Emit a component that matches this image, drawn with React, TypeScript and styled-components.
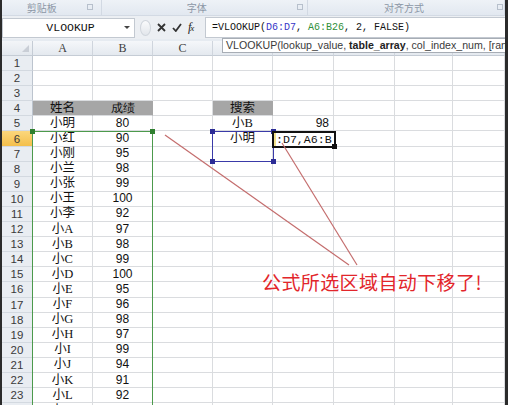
import React from 'react';
import styled, { createGlobalStyle } from 'styled-components';

const GlobalStyle = createGlobalStyle`
  html, body { margin: 0; padding: 0; background: #fff; }
  body { font-family: 'Liberation Sans', 'Noto Sans CJK SC', sans-serif; }
`;

const ROW_H = 15.1;
const HEAD_H = 15;
const COLS = [31, 60, 60, 60, 60, 61, 61, 58, 52];
const LETTERS = ['A', 'B', 'C', 'D', 'E', 'F', 'G', 'H'];

const colLeft = (i: number) => COLS.slice(0, i + 1).reduce((a, b) => a + b, 0);
const rowTop = (r: number) => HEAD_H + (r - 1) * ROW_H;

const Frame = styled.div`
  position: relative;
  width: 508px;
  height: 405px;
  box-sizing: border-box;
  border-left: 2px solid #2b2b2b;
  border-right: 3px solid #2b2b2b;
  overflow: hidden;
  background: #e6ebf1;
  display: flex;
  flex-direction: column;
`;

const Ribbon = styled.div`
  flex-shrink: 0;
  height: 15px;
  display: flex;
  background: linear-gradient(#eef2f7, #e2e8f0);
  border-bottom: 1px solid #d3dae4;
`;

const Group = styled.div<{ $w: number }>`
  width: ${({ $w }) => $w}px;
  display: flex;
  align-items: center;
  justify-content: center;
  position: relative;
  border-right: 1px solid #d2d9e3;
  font: 10px 'Noto Sans CJK SC', sans-serif;
  color: #8c97a6;
`;

const Launcher = styled.span<{ $right: number }>`
  position: absolute;
  right: ${({ $right }) => $right}px;
  top: 4px;
  width: 6px;
  height: 6px;
  border: 1px solid #b7c0cc;
  box-sizing: border-box;
`;

const FormulaBar = styled.div`
  flex-shrink: 0;
  height: 23px;
  display: flex;
  align-items: center;
  background: #eceff3;
  margin-bottom: 2px;
`;

const NameBox = styled.div`
  width: 133px;
  height: 20px;
  box-sizing: border-box;
  background: #fff;
  border: 1px solid #c3c9d1;
  display: flex;
  align-items: center;
  font: 11.5px 'Liberation Mono', monospace;
  color: #111;
`;

const NameText = styled.span`
  flex: 1;
  text-align: center;
  padding-left: 14px;
`;

const DropArrow = styled.span`
  width: 0;
  height: 0;
  border-left: 3px solid transparent;
  border-right: 3px solid transparent;
  border-top: 3px solid #444;
  margin-right: 4px;
`;

const Tools = styled.div`
  width: 70px;
  display: flex;
  align-items: center;
  gap: 6px;
  padding-left: 5px;
  box-sizing: border-box;
`;

const Knob = styled.span`
  width: 9px;
  height: 14px;
  border-radius: 50%;
  border: 1px solid #d0d5dc;
  background: linear-gradient(#fafbfc, #e2e6eb);
`;

const Fx = styled.span`
  font: italic 12px 'Liberation Serif', serif;
  color: #222;
  letter-spacing: -1px;
  & small { font-size: 9px; }
`;

const FormulaInput = styled.div`
  flex: 1;
  height: 21px;
  background: #fff;
  border: 1px solid #c3c9d1;
  border-right: none;
  box-sizing: border-box;
  display: flex;
  align-items: center;
  padding-left: 6px;
  font: 10px 'Liberation Mono', monospace;
  color: #111;
  white-space: pre;
`;

const Ref = styled.span<{ $c: string }>`
  color: ${({ $c }) => $c};
`;

const Tooltip = styled.div`
  position: absolute;
  left: 220px;
  top: 38px;
  height: 15px;
  width: 300px;
  box-sizing: border-box;
  border: 1px solid #a7adb5;
  background: #fff;
  padding-left: 3px;
  font: 10.6px 'Liberation Sans', sans-serif;
  line-height: 13px;
  color: #3a3a3a;
  white-space: nowrap;
  overflow: hidden;
  z-index: 3;
  & b { color: #222; }
`;

const Sheet = styled.div`
  position: relative;
  flex: 1;
  min-height: 0;
  background: #fff;
  display: grid;
  grid-template-columns: ${COLS.map((c) => `${c}px`).join(' ')};
  grid-template-rows: ${HEAD_H}px;
  grid-auto-rows: ${ROW_H}px;
  align-content: start;
`;

const Corner = styled.div`
  background: linear-gradient(#f3f5f8, #e3e8ee);
  border-right: 1px solid #c5ccd5;
  border-bottom: 1px solid #c5ccd5;
  position: relative;
  &::after {
    content: '';
    position: absolute;
    right: 3px;
    bottom: 3px;
    border-left: 7px solid transparent;
    border-bottom: 7px solid #c9ced6;
  }
`;

const ColHead = styled.div`
  background: linear-gradient(#f5f7fa, #e4e9ef);
  border-right: 1px solid #cfd5dd;
  border-bottom: 1px solid #c5ccd5;
  display: flex;
  align-items: center;
  justify-content: center;
  font: 12px 'Liberation Serif', serif;
  color: #3e3e3e;
  overflow: hidden;
`;

const RowHead = styled.div<{ $active?: boolean }>`
  background: ${({ $active }) => ($active ? 'linear-gradient(#fbd77d, #f4bf4b)' : '#e9edf2')};
  border-right: 1px solid #bcc4ce;
  border-bottom: 1px solid #d3d9e0;
  display: flex;
  align-items: center;
  justify-content: center;
  font: 11.5px 'Liberation Sans', sans-serif;
  color: #3a3a3a;
  box-sizing: border-box;
`;

const Cell = styled.div<{ $fill?: boolean; $align?: string; $num?: boolean }>`
  background: ${({ $fill }) => ($fill ? '#a6a6a6' : '#fff')};
  border-right: 1px solid ${({ $fill }) => ($fill ? '#a6a6a6' : '#dadcdf')};
  border-bottom: 1px solid #dadcdf;
  display: flex;
  align-items: center;
  justify-content: ${({ $align }) => $align || 'center'};
  padding-right: ${({ $align }) => ($align === 'flex-end' ? '4px' : '0')};
  box-sizing: border-box;
  font: ${({ $num }) => ($num ? "12px 'Liberation Sans'" : "12.5px 'Liberation Serif', 'Noto Sans CJK SC'")}, sans-serif;
  line-height: 13px;
  color: #111;
  white-space: nowrap;
  overflow: visible;
`;

const Box = styled.div<{ $x: number; $y: number; $w: number; $h: number; $c: string; $bw: number }>`
  position: absolute;
  left: ${({ $x }) => $x}px;
  top: ${({ $y }) => $y}px;
  width: ${({ $w }) => $w}px;
  height: ${({ $h }) => $h}px;
  box-sizing: border-box;
  border: ${({ $bw, $c }) => `${$bw}px solid ${$c}`};
  z-index: 2;
`;

const Handle = styled.span<{ $c: string; $l?: boolean; $t?: boolean }>`
  position: absolute;
  width: 5px;
  height: 5px;
  background: ${({ $c }) => $c};
  ${({ $l }) => ($l ? 'left: -3px;' : 'right: -3px;')}
  ${({ $t }) => ($t ? 'top: -3px;' : 'bottom: -3px;')}
`;

const EditText = styled.div`
  height: 100%;
  display: flex;
  align-items: center;
  background: #fff;
  font: 11.6px 'Liberation Mono', monospace;
  color: #111;
  white-space: pre;
  overflow: hidden;
  border-left: 2px solid #f2e18a;
`;

const Arrows = styled.svg`
  position: absolute;
  left: -2px;
  top: 0;
  z-index: 4;
  pointer-events: none;
`;

const Note = styled.div`
  position: absolute;
  left: 260px;
  top: 268px;
  font: 19px 'Noto Sans CJK SC', sans-serif;
  color: #e2262b;
  letter-spacing: 0.4px;
  text-shadow: 0 0 2px #fff, 0 0 2px #fff;
  z-index: 4;
  white-space: nowrap;
`;

type Row = { [col: string]: string };

const names: [string, string][] = [
  ['小明', '80'], ['小红', '90'], ['小刚', '95'], ['小兰', '98'], ['小张', '99'],
  ['小王', '100'], ['小李', '92'], ['小A', '97'], ['小B', '98'], ['小C', '99'],
  ['小D', '100'], ['小E', '95'], ['小F', '96'], ['小G', '98'], ['小H', '97'],
  ['小I', '99'], ['小J', '94'], ['小K', '91'], ['小L', '92'], ['小M', '93'],
];

const rows: Row[] = Array.from({ length: 24 }, (_, i) => {
  const r = i + 1;
  const row: Row = {};
  if (r === 4) {
    row.A = '姓名';
    row.B = '成绩';
    row.D = '搜索';
  }
  if (r >= 5 && r - 5 < names.length) {
    row.A = names[r - 5][0];
    row.B = names[r - 5][1];
  }
  if (r === 5) {
    row.D = '小B';
    row.E = '98';
  }
  if (r === 6) row.D = '小明';
  return row;
});

const App: React.FC = () => (
  <Frame>
    <GlobalStyle />
    <Ribbon>
      <Group $w={100}>
        <span style={{ marginRight: 20 }}>剪贴板</span>
        <Launcher $right={8} />
      </Group>
      <Group $w={206}>
        <span style={{ marginRight: 16 }}>字体</span>
        <Launcher $right={4} />
      </Group>
      <Group $w={197}>
        <span style={{ marginRight: 4 }}>对齐方式</span>
        <Launcher $right={1} />
      </Group>
    </Ribbon>

    <FormulaBar>
      <NameBox>
        <NameText>VLOOKUP</NameText>
        <DropArrow />
      </NameBox>
      <Tools>
        <Knob />
        <svg width="9" height="9" viewBox="0 0 9 9">
          <path d="M1 1 L8 8 M8 1 L1 8" stroke="#333" strokeWidth="1.8" />
        </svg>
        <svg width="10" height="9" viewBox="0 0 10 9">
          <path d="M1 5 L3.8 8 L9 1" stroke="#333" strokeWidth="1.8" fill="none" />
        </svg>
        <Fx>
          f<small>x</small>
        </Fx>
      </Tools>
      <FormulaInput>
        =VLOOKUP(<Ref $c="#3535c8">D6:D7</Ref>, <Ref $c="#2f8f3a">A6:B26</Ref>, 2, FALSE)
      </FormulaInput>
    </FormulaBar>

    <Tooltip>
      VLOOKUP(lookup_value, <b>table_array</b>, col_index_num, [range_lookup])
    </Tooltip>

    <Sheet>
      <Corner />
      {LETTERS.map((l) => (
        <ColHead key={l}>{l}</ColHead>
      ))}
      {rows.map((row, i) => (
        <React.Fragment key={i}>
          <RowHead $active={i + 1 === 6}>{i + 1}</RowHead>
          {LETTERS.map((l) => (
            <Cell
              key={l}
              $fill={i + 1 === 4 && (l === 'A' || l === 'B' || l === 'D')}
              $num={l === 'B' || l === 'E'}
              $align={l === 'E' ? 'flex-end' : 'center'}
            >
              {row[l]}
            </Cell>
          ))}
        </React.Fragment>
      ))}

      <Box $x={colLeft(0) - 1} $y={rowTop(6) - 1} $w={121} $h={400} $c="#4c9a4c" $bw={1.5}>
        <Handle $c="#2f7f2f" $l $t />
        <Handle $c="#2f7f2f" $t />
      </Box>

      <Box $x={colLeft(3) - 1} $y={rowTop(6) - 1} $w={62} $h={ROW_H * 2 + 1} $c="#3a3aa8" $bw={1.5}>
        <Handle $c="#2c2c96" $l $t />
        <Handle $c="#2c2c96" $t />
        <Handle $c="#2c2c96" $l />
        <Handle $c="#2c2c96" />
      </Box>

      <Box $x={colLeft(4) - 1} $y={rowTop(6) - 1} $w={64} $h={ROW_H + 2} $c="#111" $bw={2}>
        <EditText>:D7,A6:B</EditText>
        <Handle $c="#111" />
      </Box>
    </Sheet>

    <Arrows width="508" height="405" viewBox="0 0 508 405">
      <line x1="165" y1="135" x2="349" y2="265" stroke="#c46d6d" strokeWidth="1.2" />
      <line x1="282" y1="143" x2="357" y2="265" stroke="#c46d6d" strokeWidth="1.2" />
    </Arrows>
    <Note>公式所选区域自动下移了!</Note>
  </Frame>
);

export default App;
